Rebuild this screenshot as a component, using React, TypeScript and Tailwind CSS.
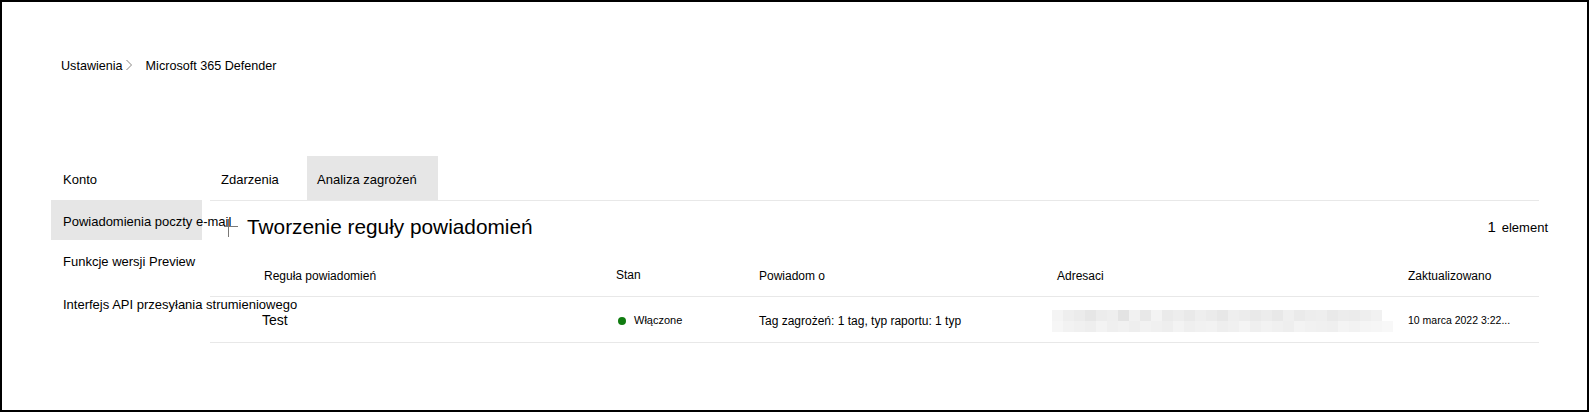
import React from 'react';

const navItems = [
  { label: 'Konto', active: false },
  { label: 'Powiadomienia poczty e-mail', active: true },
  { label: 'Funkcje wersji Preview', active: false },
  { label: 'Interfejs API przesyłania strumieniowego', active: false },
];

// pixelated (blurred) recipients
const topRow = ['#f4f4f4', '#eeeeee', '#ebebeb', '#e6e6e6', '#ececec', '#eeeeee', '#e3e3e3', '#f1f1f1', '#e8e8e8', '#f3f3f3', '#eaeaea', '#ededed', '#e9e9e9', '#eeeeee', '#ebebeb', '#e7e7e7', '#eeeeee', '#ececec', '#e9e9e9', '#ececec', '#e8e8e8', '#efefef', '#eaeaea', '#ededed', '#eeeeee', '#e9e9e9', '#ececec', '#ebebeb', '#eeeeee', '#f1f1f1'];
const bottomRow = ['#f6f6f6', '#f2f2f2', '#f0f0f0', '#eeeeee', '#f3f3f3', '#efefef', '#f1f1f1', '#eeeeee', '#f2f2f2', '#f0f0f0', '#eeeeee', '#f3f3f3', '#efefef', '#f1f1f1', '#f2f2f2', '#eeeeee', '#f0f0f0', '#f4f4f4', '#efefef', '#f2f2f2', '#f0f0f0', '#eeeeee', '#f3f3f3', '#f1f1f1', '#f0f0f0', '#efefef', '#f4f4f4', '#f2f2f2', '#f5f5f5', '#f6f6f6', '#f8f8f8'];

const Blurred = () => (
  <svg width="345" height="22" viewBox="0 0 345 22">
    {topRow.map((c, i) => (
      <rect key={'t' + i} x={i * 11} y={0} width={11} height={11} fill={c} />
    ))}
    {bottomRow.map((c, i) => (
      <rect key={'b' + i} x={i * 11} y={11} width={11} height={11} fill={c} />
    ))}
  </svg>
);

const PlusIcon = () => (
  <svg width="18" height="20" viewBox="0 0 18 20" className="shrink-0">
    <line x1="6.5" y1="1" x2="6.5" y2="19" stroke="#7a7876" strokeWidth="1" />
    <line x1="2" y1="8.5" x2="16" y2="8.5" stroke="#7a7876" strokeWidth="1" />
  </svg>
);

const cols = 'grid grid-cols-[352px_143px_298px_351px_1fr] pl-[54px]';

export default function App() {
  return (
    <div
      className="w-[1589px] h-[412px] border-2 border-black bg-white text-black overflow-hidden"
      style={{ fontFamily: '"Liberation Sans", Arial, sans-serif' }}
    >
      <div className="pt-[56px] pl-[59px] h-[72px] flex items-center text-[12.6px]">
        <span>Ustawienia</span>
        <svg width="8" height="12" viewBox="0 0 8 12" className="ml-[2px] mr-[13px] -mt-[2px]">
          <path d="M1.5 1 L6.5 6 L1.5 11" fill="none" stroke="#8a8886" strokeWidth="1" />
        </svg>
        <span>Microsoft 365 Defender</span>
      </div>

      <div className="flex mt-[82px]">
        <nav className="ml-[49px] w-[151px] pt-[2px] flex flex-col gap-[2px] shrink-0">
          {navItems.map((item, i) => (
            <div
              key={item.label}
              className={`h-10 flex items-center pl-3 text-[13px] whitespace-nowrap relative z-10 ${item.active ? 'bg-[#e6e6e6] pt-[3px]' : ''} ${i === 0 ? 'pt-[4px]' : ''} ${i === 3 ? 'pt-[2px]' : ''}`}
            >
              {item.label}
            </div>
          ))}
        </nav>

        <main className="ml-[8px] w-[1329px]">
          <div className="flex h-[45px] border-b border-[#e8e8e8]">
            <div className="w-[97px] pl-[11px] pt-[3px] flex items-center text-[13px]">Zdarzenia</div>
            <div className="w-[131px] pl-[10px] pt-[3px] flex items-center text-[13px] bg-[#e6e6e6]">Analiza zagrożeń</div>
          </div>

          <div className="flex items-center h-[49px] pt-[4px] pl-[12px] w-[1338px]">
            <PlusIcon />
            <h1 className="ml-[7px] text-[20.8px] leading-none">Tworzenie reguły powiadomień</h1>
            <div className="ml-auto flex items-baseline">
              <span className="text-[15px]">1</span>
              <span className="ml-[6px] text-[13px]">element</span>
            </div>
          </div>

          <div className={`${cols} h-[47px] pt-[6px] items-center border-b border-[#e8e8e8] text-[12px]`}>
            <div>Reguła powiadomień</div>
            <div className="-mt-[2px]">Stan</div>
            <div>Powiadom o</div>
            <div>Adresaci</div>
            <div>Zaktualizowano</div>
          </div>

          <div className={`${cols} h-[46px] pt-[2px] items-center border-b border-[#e8e8e8]`}>
            <div className="-ml-[2px] text-[14px]">Test</div>
            <div className="flex items-center text-[11px]">
              <span className="w-[8px] h-[8px] rounded-full bg-[#107c10] ml-[2px] mr-[8px]" />
              Włączone
            </div>
            <div className="text-[12px]">Tag zagrożeń: 1 tag, typ raportu: 1 typ</div>
            <div className="-ml-[5px] flex items-center">
              <Blurred />
            </div>
            <div className="text-[10.5px] whitespace-nowrap">10 marca 2022 3:22...</div>
          </div>
        </main>
      </div>
    </div>
  );
}
